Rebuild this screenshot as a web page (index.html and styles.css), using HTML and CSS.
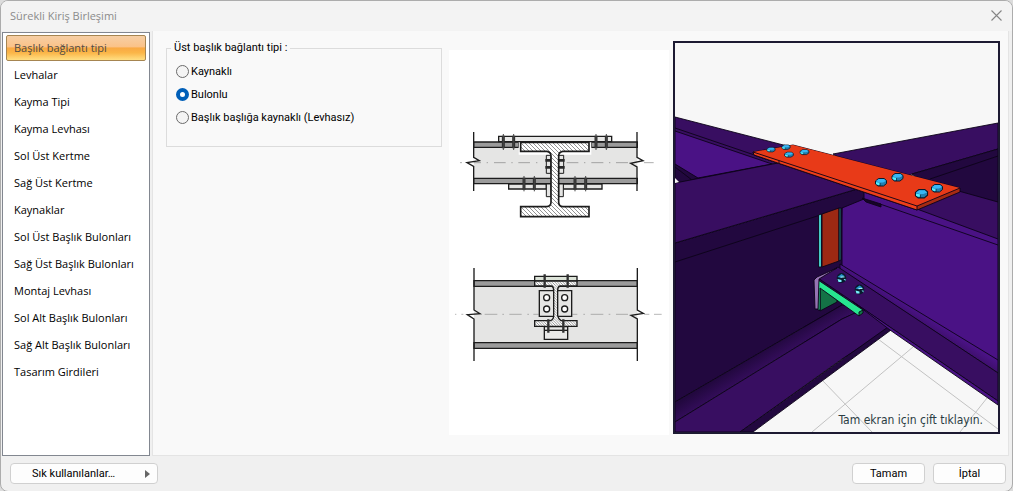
FILE: index.html
```html
<!DOCTYPE html>
<html lang="tr">
<head>
<meta charset="utf-8">
<title>Sürekli Kiriş Birleşimi</title>
<link rel="stylesheet" href="styles.css">
</head>
<body>
<div class="window">
  <header class="titlebar">
    <h1 class="title">Sürekli Kiriş Birleşimi</h1>
    <button class="close" type="button" aria-label="Kapat">
      <svg width="11" height="11" viewBox="0 0 11 11"><path d="M.5 .5l10 10M10.5 .5l-10 10" stroke="#858585" stroke-width="1.1" fill="none"/></svg>
    </button>
  </header>
  <main class="body">
    <nav class="sidebar">
      <button type="button" class="item selected">Başlık bağlantı tipi</button>
      <button type="button" class="item">Levhalar</button>
      <button type="button" class="item">Kayma Tipi</button>
      <button type="button" class="item">Kayma Levhası</button>
      <button type="button" class="item">Sol Üst Kertme</button>
      <button type="button" class="item">Sağ Üst Kertme</button>
      <button type="button" class="item">Kaynaklar</button>
      <button type="button" class="item">Sol Üst Başlık Bulonları</button>
      <button type="button" class="item">Sağ Üst Başlık Bulonları</button>
      <button type="button" class="item">Montaj Levhası</button>
      <button type="button" class="item">Sol Alt Başlık Bulonları</button>
      <button type="button" class="item">Sağ Alt Başlık Bulonları</button>
      <button type="button" class="item">Tasarım Girdileri</button>
    </nav>
    <section class="panel">
      <form class="options">
        <fieldset class="group">
          <legend>Üst başlık bağlantı tipi :</legend>
          <label class="choice"><input type="radio" name="flange">Kaynaklı</label>
          <label class="choice"><input type="radio" name="flange" checked>Bulonlu</label>
          <label class="choice"><input type="radio" name="flange">Başlık başlığa kaynaklı (Levhasız)</label>
        </fieldset>
      </form>
      <div class="diagram">
        <svg viewBox="449 50 220 385" role="img" aria-label="Birleşim kesitleri">
          <defs>
            <pattern id="hatch" width="12" height="12" patternUnits="userSpaceOnUse">
              <rect width="12" height="12" fill="#fff"/><path d="M-1 -1L13 13M-1 11L1 13M11 -1L13 1" stroke="#333" stroke-width="1.6"/>
            </pattern>
            <pattern id="hatchFine" width="8" height="8" patternUnits="userSpaceOnUse">
              <rect width="8" height="8" fill="#fff"/><path d="M-1 -1L9 9M-1 7L1 9M7 -1L9 1" stroke="#333" stroke-width="1.5"/>
            </pattern>
          </defs>
          <g transform="translate(450 120) scale(.33333)" fill="none" stroke="#1c1c1c" stroke-width="4">
            <path d="M71 66H562V191H71z" fill="#e5e5e4" stroke="none"/>
            <path d="M71 66H206V82H71zM424 66H562V82H424zM71 175H562V191H71z" fill="#9b9b9b"/>
            <path d="M206 62H424V104H340L330 108H302L292 104H206z" fill="#fff" stroke="none"/>
            <path d="M146 49H485V65H146z" fill="#e9e9e8"/>
            <path d="M176 192H289V207H176zM340 192H456V207H340z" fill="#e5e5e4"/>
            <path d="M289 192V230H303V192zM326 192V230H340V192z" fill="#e5e5e4" stroke-width="3"/>
            <path d="M289 106H303V160H289zM326 106H341V160H326z" fill="#e5e5e4" stroke-width="3"/>
            <path d="M286 121H304M286 142H304M325 121H344M325 142H344" stroke-width="8" stroke="#292929"/>
            <path d="M212 67H417V94H338Q326 96 326 108V247Q327 260 339 260H417V290H212V260H290Q303 259 303 247V108Q303 96 291 94H212z" fill="url(#hatch)" stroke-width="5"/>
            <path d="M160 47V85M191 47V85M438 47V85M469 47V85M222 173V209M253 173V209M375 173V209M407 173V209" stroke="#303030" stroke-width="9"/>
            <path d="M160 42V90M191 42V90M438 42V90M469 42V90M222 168V214M253 168V214M375 168V214M407 168V214" stroke="#444" stroke-width="3"/>
            <path d="M30 128H36M55 128H93M110 128H114M132 128H167M184 128H188M205 128H240M258 128H262M350 128H385M402 128H406M424 128H460M477 128H481M498 128H534M582 128H611" stroke="#777" stroke-width="1.8"/>
            <path d="M71 112L88 122 51 128 71 139z" fill="#fff" stroke="none"/>
            <path d="M71 36V112L88 122 51 128 71 139V213M561 36V112L579 122 542 130 561 141V213"/>
          </g>
          <g transform="translate(450 260) scale(.33333)" fill="none" stroke="#1c1c1c" stroke-width="4">
            <path d="M72 62H562V264H72z" fill="#e5e5e4" stroke="none"/>
            <path d="M72 62H562V79H72zM72 248H562V265H72z" fill="#9b9b9b"/>
            <path d="M15 163H19M34 163H40M104 163H142M157 163H162M178 163H215M232 163H237M250 163H266M367 163H382M400 163H405M422 163H460M476 163H481M498 163H534M582 163H598M612 163H635" stroke="#888" stroke-width="1.8"/>
            <path d="M254 49H381V63H254z" fill="#dce3d8"/>
            <path d="M268 92H365V169H268z" fill="#e5e5e4"/>
            <path d="M283 200H353V238H283z" fill="#e9e9e8"/>
            <path d="M283 211H353"/>
            <path d="M254 63H381V78H330Q323 80 323 91V167Q325 177 333 182H381V199H254V182H301Q311 178 311 167V91Q311 80 305 78H254z" fill="url(#hatchFine)"/>
            <circle cx="290" cy="113" r="9" fill="#fff"/><circle cx="344" cy="113" r="9" fill="#fff"/><circle cx="290" cy="147" r="9" fill="#fff"/><circle cx="344" cy="147" r="9" fill="#fff"/>
            <path d="M284 43V83M353 43V83M295 178V218M340 178V218" stroke="#303030" stroke-width="7"/>
            <path d="M72 24V150L90 161 52 164 72 177V303M562 24V150L580 160 543 166 562 177V303"/>
          </g>
        </svg>
      </div>
      <div class="preview">
        <svg viewBox="675 43 323 389" preserveAspectRatio="xMidYMid slice" role="img" aria-label="Birleşim görünümü">
          <defs>
            <linearGradient id="fillet" gradientUnits="userSpaceOnUse" x1="750" y1="358" x2="760" y2="374"><stop offset="0" stop-color="#22083f"/><stop offset="1" stop-color="#380e61"/></linearGradient>
            <linearGradient id="filletRight" gradientUnits="userSpaceOnUse" x1="922" y1="314" x2="915" y2="325"><stop offset="0" stop-color="#4a1285"/><stop offset="1" stop-color="#380e61"/></linearGradient>
            <g id="bolt">
              <path d="M-5.5 -1L-2.5 -3.5H3L5.5 -1.5V1.5L2.5 4H-3L-5.5 2z" fill="#237fb0" stroke="#071b2c" stroke-width="1"/>
              <path d="M-5 -1L-2 -3H3L5 -1 2 .5H-2z" fill="#38b6f4"/><path d="M-5 0L-1 1V3H-3L-5 2z" fill="#50f0ff"/><path d="M-1 1V4" stroke="#071b2c" stroke-width=".7"/>
            </g>
            <g id="nut">
              <ellipse rx="4.8" ry="5" fill="#081b2e"/><path d="M-4 -1L0 -4 3 -2 0 0z" fill="#2695cb"/><path d="M-4 1L0 2V4H-3zM2 1H4V3z" fill="#79efff"/><path d="M-1 -1H3" stroke="#aee" stroke-width="1"/>
            </g>
          </defs>
          <path d="M675 43H998V432H675z" fill="#f7f7f7"/>
          <path d="M878 339L998 429M913 347L812 432M987 398L960 432M823 381L872 432" stroke="#c2c2c2" fill="none"/>
          <path d="M818 278H900L890 330 842 359 800 340z" fill="#380e61"/>
          <g stroke="#0c0318" stroke-width=".9" stroke-linejoin="round">
            <path d="M675 117L795 148 778 163 693 180 675 168z" fill="#380e61"/>
            <path d="M675 164L700 178 679 183 675 179z" fill="#22083f"/>
            <path d="M675 131L772 164 698 178 675 164z" fill="#4a1285"/>
            <path d="M675 128L778 163M675 167L692 180" fill="none"/>
            <path d="M833 154L998 123V149L912 174 890 185z" fill="#380e61"/>
            <path d="M912 174L998 149V202L940 195z" fill="#22083f"/>
            <path d="M930 179L998 156" fill="none"/>
            <path d="M890 203L955 190 998 202V245L917 216z" fill="#380e61"/>
            <path d="M842 207L863 190 917 209 998 239V365L840 268z" fill="#4a1285"/>
            <path d="M880 204L998 245" fill="none"/>
            <path d="M675 243L864 187V199L842 208V305L675 402z" fill="#22083f"/>
            <path d="M675 262L842 208" fill="none"/>
            <path d="M675 183L778 163 864 187 675 243z" fill="#380e61"/>
            <path d="M675 402L842 305 865 309 842 319 675 422z" fill="url(#fillet)"/>
            <path d="M675 422L842 319 870 306 890 328 842 359 740 432H675z" fill="#380e61"/>
            <path d="M740 432L888 327 891 330 753 432z" fill="#22083f"/>
            <path d="M840 264L998 360V373L840 269z" fill="url(#filletRight)"/>
            <path d="M818 278L838 267 998 373V401z" fill="#380e61"/>
            <path d="M852 301L998 401V405L890 330z" fill="#4a1285"/>
            <path d="M822 214L839 208V261L822 267z" fill="#9d2913"/>
            <path d="M818.500 215L821.500 214V267H818.500z" fill="#46c9c6"/>
            <path d="M839 208L841 208V260L839 261z" fill="#22716d"/>
            <path d="M820 287L837 300V302L820 311z" fill="#147246"/>
            <path d="M818 280L863 310 859 316 820 288V310H818z" fill="#27e690"/>
            <path d="M863 310L863 313 859 316V312z" fill="#117949"/>
            <path d="M814 280L817 277 837 268 819 279 818 309H815z" fill="#9673b4"/>
            <path d="M862 198L881 204V207L866 202z" fill="#170329"/>
            <path d="M753 152L793 145 960 188V192L917 210 754 155z" fill="#a62b13"/>
            <path d="M753 152L793 145 960 188 917 206z" fill="#e83a18" stroke="none"/>
            <path d="M753 152L917 206V210L754 155z" fill="#ef3f19"/>
            <path d="M779 161V163M917 206L960 188" fill="none"/>
          </g>
          <path d="M675 178L679 182 675 183z" fill="#f7f7f7"/>
          <use href="#bolt" transform="translate(771 149.500) scale(.75 .6)"/><use href="#bolt" transform="translate(786 147) scale(.75 .6)"/><use href="#bolt" transform="translate(789 154.500) scale(.8 .65)"/><use href="#bolt" transform="translate(804.500 152) scale(.8 .65)"/>
          <use href="#bolt" x="881" y="182"/><use href="#bolt" x="897.500" y="177"/><use href="#bolt" transform="translate(921.500 193.500) scale(1.1)"/><use href="#bolt" x="937" y="188"/>
          <use href="#nut" x="841.500" y="278"/><use href="#nut" x="859.500" y="289.500"/>
        </svg>
        <span class="hint">Tam ekran için çift tıklayın.</span>
      </div>
    </section>
  </main>
  <footer class="footer">
    <button type="button" class="btn favorites"><span class="grow">Sık kullanılanlar…</span><svg width="5" height="8" viewBox="0 0 5 8"><path d="M0 0L5 4 0 8z" fill="#666"/></svg></button>
    <button type="button" class="btn">Tamam</button>
    <button type="button" class="btn">İptal</button>
  </footer>
</div>
</body>
</html>
```
FILE: styles.css
```css
* { box-sizing: border-box; }
body {
  margin: 0;
  background: #dcdcdc;
  color: #000;
  font: 11px/16px "Open Sans", "Noto Sans", sans-serif;
}
button { font: inherit; color: inherit; margin: 0; }
.window {
  display: flex;
  flex-direction: column;
  min-height: 100vh;
  border: 1px solid #acacac;
  border-radius: 8px;
  background: #f0f0f0;
  overflow: hidden;
}
.titlebar {
  display: flex;
  align-items: center;
  justify-content: space-between;
  height: 30px;
  padding: 0 10px 1px 9px;
  background: #f3f3f3;
}
.title { margin: 0; font-size: 11px; font-weight: 400; color: #8b8b8b; }
.close { display: flex; padding: 0; border: 0; background: none; }
.body { display: flex; flex: 1; gap: 2px; padding: 0 3px 0 1px; }
.sidebar {
  display: flex;
  flex-direction: column;
  gap: 1px;
  width: 148px;
  margin-top: 1px;
  padding: 2px 3px;
  border: 1px solid #828790;
  background: #fff;
}
.item {
  height: 26px;
  padding: 0 7px;
  border: 1px solid transparent;
  border-radius: 2px;
  background: none;
  text-align: left;
  white-space: nowrap;
}
.selected {
  border-color: #a68551;
  background: linear-gradient(#f6cfa5, #fbc288 45%, #f9a944 50%, #fbb648 70%, #ffdf83);
  color: #514b45;
}
.panel {
  display: flex;
  flex: 1;
  align-items: flex-start;
  padding: 9px 8px 20px 13px;
  border: 1px solid #e4e4e4;
  border-top: 0;
  background: #f9f9f9;
}
.options { flex: 1; padding-right: 7px; }
.group {
  display: flex;
  flex-direction: column;
  gap: 7px;
  min-width: 0;
  margin: 0;
  padding: 8px 9px 20px;
  border: 1px solid #dcdcdc;
  font-family: Roboto, "Open Sans", sans-serif;
}
.group legend { margin-left: -5px; padding: 0 3px; }
.choice { display: flex; align-items: center; gap: 2px; white-space: nowrap; }
.choice input {
  appearance: none;
  width: 13px;
  height: 13px;
  margin: 0 0 1px;
  border: 1px solid #6b6b6b;
  border-radius: 50%;
  background: #f4f4f4;
}
.choice input:checked { border: 4px solid #005fb8; background: #fff; }
.diagram { flex: 0 0 220px; margin: 10px 4px 0 0; background: #fff; }
.diagram svg { display: block; width: 100%; }
.preview {
  position: relative;
  flex: 0 0 327px;
  margin-top: 1px;
  border: 2px solid #1d1a32;
}
.preview svg { display: block; width: 100%; }
.hint {
  position: absolute;
  right: 15px;
  bottom: 4px;
  color: #2b3d43;
  font: 12px/16px "DejaVu Sans Condensed", "DejaVu Sans", sans-serif;
}
.footer {
  display: flex;
  align-items: center;
  gap: 8px;
  height: 35px;
  padding: 0 6px 0 9px;
  font-family: Roboto, "Open Sans", sans-serif;
}
.btn {
  width: 73px;
  height: 21px;
  padding: 0;
  border: 1px solid #d0d0d0;
  border-radius: 4px;
  background: #fdfdfd;
}
.favorites {
  display: flex;
  align-items: center;
  width: 148px;
  margin-right: auto;
  padding: 0 7px 0 21px;
  text-align: left;
}
.grow { flex: 1; }
```
